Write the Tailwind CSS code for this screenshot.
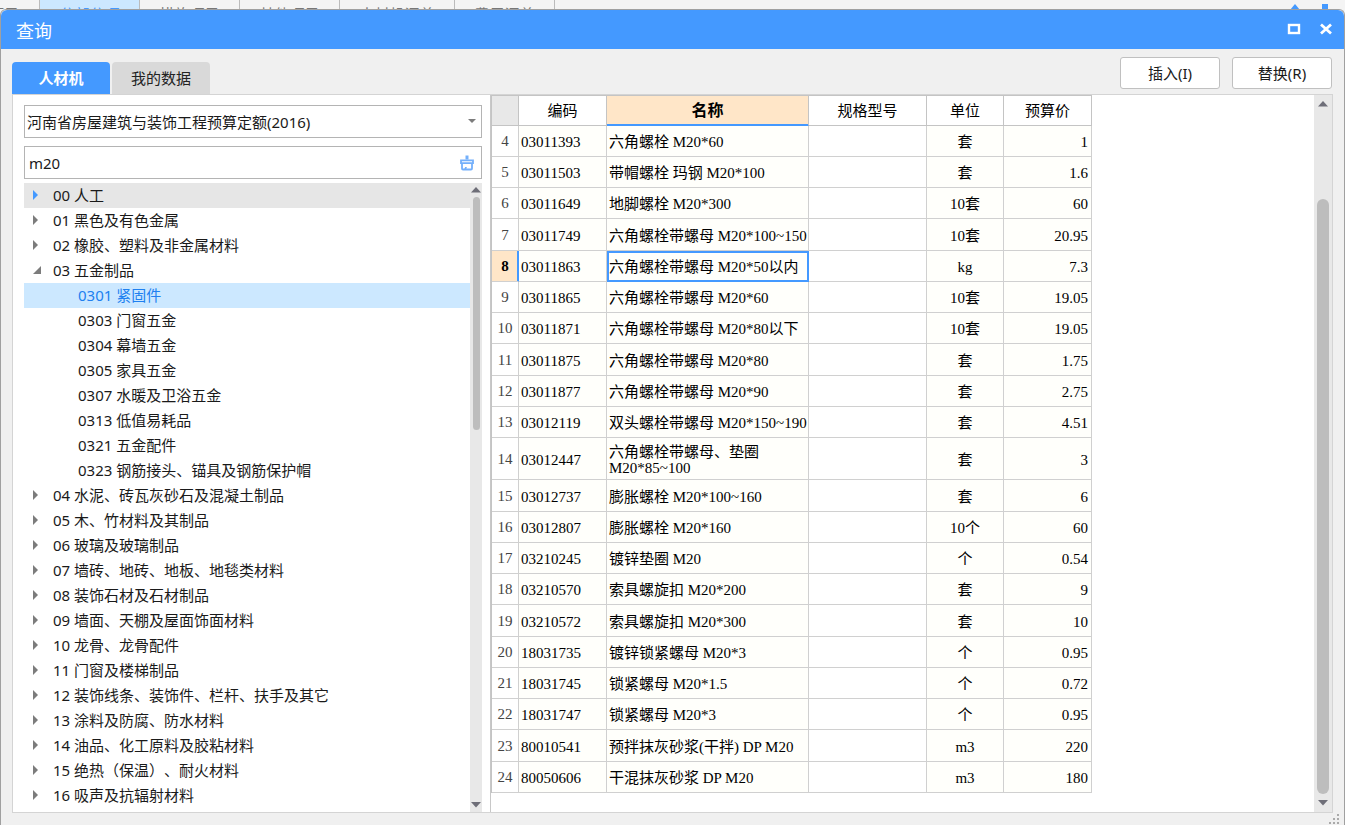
<!DOCTYPE html>
<html lang="zh-CN">
<head>
<meta charset="utf-8">
<meta name="viewport" content="width=device-width, initial-scale=1">
<title>查询</title>
<script src="https://cdn.jsdelivr.net/npm/@tailwindcss/browser@4"></script>
</head>
<body class="flex h-screen flex-col overflow-hidden bg-[#f4f4f4] font-['Noto_Sans','Noto_Sans_CJK_SC',sans-serif] text-[15px] leading-5 text-[#1a1a1a] [text-spacing-trim:space-all]">

<!-- Tab strip of the window behind the dialog -->
<div class="flex h-[9px] shrink-0 items-start overflow-hidden text-[#777]" aria-hidden="true">
  <div class="flex h-9 w-10 justify-end overflow-hidden border-r border-[#bbb] pt-1 pr-5 whitespace-nowrap">项目</div>
  <div class="h-9 w-[100px] border-r border-[#bbb] bg-[#cce8ff] pt-1 text-center text-[#4499ff]">分部分项</div>
  <div class="h-9 w-[100px] border-r border-[#bbb] pt-1 text-center">措施项目</div>
  <div class="h-9 w-[100px] border-r border-[#bbb] pt-1 text-center">其他项目</div>
  <div class="h-9 w-[115px] border-r border-[#bbb] pt-1 text-center">人材机汇总</div>
  <div class="h-9 w-[100px] border-r border-[#bbb] pt-1 text-center">费用汇总</div>
  <div class="ml-auto flex gap-5 pt-1 pr-4">
    <svg class="h-3 w-3" viewBox="0 0 12 12"><path d="M6 0l5 6H1z" fill="#4499ff"/></svg>
    <svg class="h-3 w-2" viewBox="0 0 8 12"><path d="M1 0h6v12H1z" fill="#4499ff"/></svg>
  </div>
</div>

<section class="flex min-h-0 flex-1 flex-col rounded-t-md border-x border-t border-[#a0a0a0] bg-[#f0f0f0]" role="dialog" aria-labelledby="title">
  <header class="flex h-[39px] shrink-0 items-center rounded-t-md bg-[#4499ff] pr-2 pb-0.5 pl-[15px] text-white">
    <h1 id="title" class="flex-1 pt-1 text-[18px] leading-6">查询</h1>
    <div class="flex gap-3">
      <button class="flex h-5 w-5 items-center justify-center" aria-label="最大化">
        <svg class="h-3 w-3.5" viewBox="0 0 14 12"><rect x="2" y="2" width="10" height="8" fill="none" stroke="#fff" stroke-width="2.4"/></svg>
      </button>
      <button class="flex h-5 w-5 items-center justify-center" aria-label="关闭">
        <svg class="h-3 w-3.5" viewBox="0 0 14 12"><path d="M2 1.5L12 10.5M12 1.5L2 10.5" stroke="#fff" stroke-width="2.8"/></svg>
      </button>
    </div>
  </header>

  <div class="flex h-[45px] shrink-0 items-end pr-3 pl-[11px]">
    <div class="flex flex-1 gap-0.5" role="tablist">
      <button role="tab" aria-selected="true" class="h-8 w-[98px] rounded-t-sm bg-[#4499ff] font-bold text-white">人材机</button>
      <button role="tab" aria-selected="false" class="h-8 w-[98px] rounded-t-sm bg-[#d9d9d9] text-[#222]">我的数据</button>
    </div>
    <div class="flex gap-3 pb-[5px]">
      <button class="h-8 w-[100px] rounded-[3px] border border-[#c0c0c0] bg-white">插入(I)</button>
      <button class="h-8 w-[100px] rounded-[3px] border border-[#c0c0c0] bg-white">替换(R)</button>
    </div>
  </div>

  <div class="mr-[11px] ml-[11px] flex min-h-0 flex-1 border border-[#d4d4d4] bg-white">
    <!-- Catalogue side -->
    <aside class="flex w-[478px] shrink-0 flex-col border-r border-[#c8c8c8] pt-2.5 pr-2 pl-[11px]">
      <div class="relative">
        <select aria-label="定额库" class="block h-[33px] w-full appearance-none border border-[#b4b4b4] bg-white pl-0.5 text-[15px]">
          <option>河南省房屋建筑与装饰工程预算定额(2016)</option>
        </select>
        <svg class="pointer-events-none absolute top-3 right-1.5 h-2 w-2" viewBox="0 0 8 8"><path d="M0 2h8L4 6z" fill="#7c7c7c"/></svg>
      </div>
      <div class="mt-2 mb-1 flex h-[33px] shrink-0 items-center border border-[#b4b4b4] pr-1.5">
        <input type="text" aria-label="搜索" value="m20" class="h-full min-w-0 flex-1 pl-1 outline-none">
        <button aria-label="清除" class="h-4 w-4">
          <svg viewBox="0 0 16 16" class="h-4 w-4" fill="none" stroke="#74b0fb" stroke-width="1.8"><path d="M8 0.500v4" stroke-width="3"/><path d="M2 8.200V5.300h12v2.900zM3 8.500v5q0 1 1 1h8q1 0 1-1v-5M5.500 14.500q1.300-.8 1.500-2.500"/></svg>
        </button>
      </div>
      <div class="flex min-h-0 flex-1">
        <ul id="tree" role="tree" class="min-w-0 flex-1 overflow-hidden"></ul>
        <div class="flex w-3 flex-col items-center bg-[#e8e8e8] py-1">
          <svg class="h-1.5 w-2.5" viewBox="0 0 10 6"><path d="M5 0l5 5.500H0z" fill="#6e6e78"/></svg>
          <div class="mt-1 h-[233px] w-[7px] rounded-full bg-[#bdbdbd]"></div>
          <svg class="mt-auto h-1.5 w-2.5" viewBox="0 0 10 6"><path d="M0 0h10L5 5.500z" fill="#6e6e78"/></svg>
        </div>
      </div>
    </aside>

    <!-- Result grid -->
    <main class="min-w-0 flex-1 overflow-hidden">
      <table class="w-[601px] table-fixed border-separate border-spacing-0 border-t border-l border-[#c4c4c4] font-['Liberation_Serif','Noto_Sans_CJK_SC',serif] leading-4 text-black">
        <colgroup><col class="w-[27px]"><col class="w-[88px]"><col class="w-[202px]"><col class="w-[118px]"><col class="w-[77px]"><col class="w-[88px]"></colgroup>
        <thead>
          <tr class="h-[30px] [&>th]:border-r [&>th]:border-b [&>th]:border-[#c4c4c4] [&>th]:p-0 [&>th]:font-normal">
            <th class="bg-[#e8e8e8]" aria-label="序号"></th>
            <th scope="col">编码</th>
            <th scope="col" class="bg-[#ffe6c8] text-base leading-4 shadow-[inset_0_-1px_0_#4499ff] border-b-[#4499ff]!"><b>名称</b></th>
            <th scope="col">规格型号</th>
            <th scope="col">单位</th>
            <th scope="col">预算价</th>
          </tr>
        </thead>
        <tbody id="rows"></tbody>
      </table>
    </main>
    <div class="flex w-[18px] flex-col items-center bg-[#e8e8e8] py-1.5">
      <svg class="h-1.5 w-2.5" viewBox="0 0 10 6"><path d="M5 0l5 5.500H0z" fill="#6e6e78"/></svg>
      <div class="mt-[92px] mb-1.5 w-3 flex-1 rounded-full bg-[#bdbdbd]"></div>
      <svg class="h-1.5 w-2.5" viewBox="0 0 10 6"><path d="M0 0h10L5 5.500z" fill="#6e6e78"/></svg>
    </div>
  </div>

  <footer class="flex h-3 shrink-0 justify-end pr-1">
    <svg class="h-3 w-3" viewBox="0 0 12 12" fill="#aaa"><path d="M9 1h2v2H9zM5 5h2v2H5zM9 5h2v2H9zM1 9h2v2H1zM5 9h2v2H5zM9 9h2v2H9z"/></svg>
  </footer>
</section>

<script>
const tree = [
  '00 人工', '01 黑色及有色金属', '02 橡胶、塑料及非金属材料', '03 五金制品',
  '0301 紧固件', '0303 门窗五金', '0304 幕墙五金', '0305 家具五金', '0307 水暖及卫浴五金',
  '0313 低值易耗品', '0321 五金配件', '0323 钢筋接头、锚具及钢筋保护帽',
  '04 水泥、砖瓦灰砂石及混凝土制品', '05 木、竹材料及其制品', '06 玻璃及玻璃制品',
  '07 墙砖、地砖、地板、地毯类材料', '08 装饰石材及石材制品', '09 墙面、天棚及屋面饰面材料',
  '10 龙骨、龙骨配件', '11 门窗及楼梯制品', '12 装饰线条、装饰件、栏杆、扶手及其它',
  '13 涂料及防腐、防水材料', '14 油品、化工原料及胶粘材料', '15 绝热（保温）、耐火材料', '16 吸声及抗辐射材料'
];
document.getElementById('tree').innerHTML = tree.map((label, i) => {
  const child = /^\d{4}/.test(label);
  const tone = i === 0 ? 'bg-[#e6e6e6]' : i === 4 ? 'bg-[#cce8ff] text-[#2080f0]' : '';
  const open = label.startsWith('03 ');
  const arrow = child ? '' : `<svg class="h-2.5 w-2.5" viewBox="0 0 10 10"><path d="${open ? 'M9 1v8H1z' : 'M1 0l5 5-5 5z'}" fill="${i ? '#7c7c7c' : '#4499ff'}"/></svg>`;
  return `<li role="treeitem" aria-level="${child ? 2 : 1}"${child ? '' : ` aria-expanded="${open}"`}${i === 4 ? ' aria-selected="true"' : ''}>
    <button class="flex h-[25px] w-full items-center pb-px whitespace-nowrap ${child ? 'pl-[54px]' : 'gap-[11px] pl-2'} ${tone}">${arrow}<span>${label}</span></button></li>`;
}).join('');

const rows = [
  [4, '03011393', '六角螺栓 M20*60', '套', '1'],
  [5, '03011503', '带帽螺栓 玛钢 M20*100', '套', '1.6'],
  [6, '03011649', '地脚螺栓 M20*300', '10套', '60'],
  [7, '03011749', '六角螺栓带螺母 M20*100~150', '10套', '20.95'],
  [8, '03011863', '六角螺栓带螺母 M20*50以内', 'kg', '7.3'],
  [9, '03011865', '六角螺栓带螺母 M20*60', '10套', '19.05'],
  [10, '03011871', '六角螺栓带螺母 M20*80以下', '10套', '19.05'],
  [11, '03011875', '六角螺栓带螺母 M20*80', '套', '1.75'],
  [12, '03011877', '六角螺栓带螺母 M20*90', '套', '2.75'],
  [13, '03012119', '双头螺栓带螺母 M20*150~190', '套', '4.51'],
  [14, '03012447', '六角螺栓带螺母、垫圈<br>M20*85~100', '套', '3'],
  [15, '03012737', '膨胀螺栓 M20*100~160', '套', '6'],
  [16, '03012807', '膨胀螺栓 M20*160', '10个', '60'],
  [17, '03210245', '镀锌垫圈 M20', '个', '0.54'],
  [18, '03210570', '索具螺旋扣 M20*200', '套', '9'],
  [19, '03210572', '索具螺旋扣 M20*300', '套', '10'],
  [20, '18031735', '镀锌锁紧螺母 M20*3', '个', '0.95'],
  [21, '18031745', '锁紧螺母 M20*1.5', '个', '0.72'],
  [22, '18031747', '锁紧螺母 M20*3', '个', '0.95'],
  [23, '80010541', '预拌抹灰砂浆(干拌) DP M20', 'm3', '220'],
  [24, '80050606', '干混抹灰砂浆 DP M20', 'm3', '180']
];
document.getElementById('rows').innerHTML = rows.map(([n, code, name, unit, price]) => {
  const current = n === 8;
  const height = n === 14 ? 'h-[42px]' : 'h-[31px] [&:nth-child(4n)]:h-8';
  return `<tr class="${height} whitespace-nowrap [&>*]:border-r [&>*]:border-b [&>*]:border-[#d0d0d0] [&>td]:pt-0.5 [&>td]:pb-0 [&>th]:py-0">
    <th scope="row" class="px-0 ${current ? 'bg-[#ffe6c8] font-bold shadow-[inset_-1px_0_0_#4499ff] border-r-[#4499ff]!' : 'font-normal text-[#444]'}">${n}</th>
    <td class="bg-[#fffffb] pr-0 pl-0.5">${code}</td>
    <td class="bg-[#fffffb] pr-0 pl-0.5 ${current ? 'outline-2 -outline-offset-2 outline-[#4499ff]' : ''}">${name}</td>
    <td></td>
    <td class="bg-[#fffffb] px-0 text-center">${unit}</td>
    <td class="bg-[#fffffb] pr-[3px] text-right">${price}</td></tr>`;
}).join('');
</script>
</body>
</html>
